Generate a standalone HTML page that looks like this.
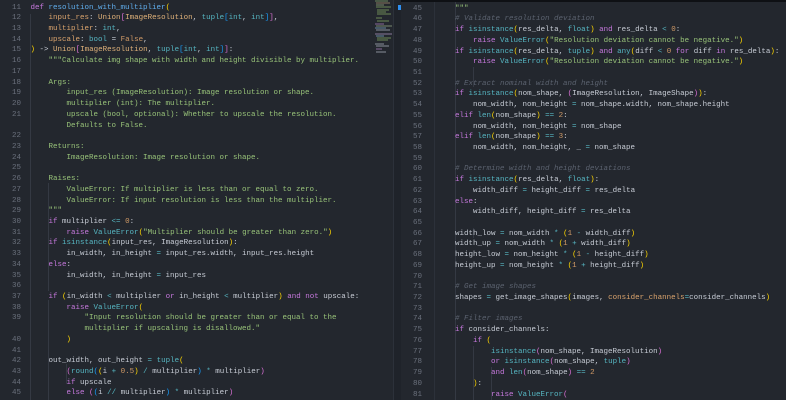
<!DOCTYPE html>
<html><head><meta charset="utf-8"><style>
html,body{margin:0;padding:0;width:786px;height:400px;overflow:hidden;background:#23272e;}
body{position:relative;font-family:"Liberation Mono",monospace;font-size:7.5px;}
.pane{position:absolute;top:0;height:400px;overflow:hidden;background:#23272e;}
.ln{position:absolute;text-align:right;color:#6b717d;}
.code{position:absolute;color:#c8cdd6;}
.ln div,.code div{height:10.73px;line-height:10.73px;white-space:pre;}
.k{color:#c678dd}.f{color:#61afef}.p{color:#dba46d}.t{color:#e0b27a}.b{color:#56b6c2}
.s{color:#98c379}.c{color:#5c6370;font-style:italic}.n{color:#d19a66}.o{color:#56b6c2}
.y{color:#ffd700}.m{color:#da70d6}.u{color:#179fff}
.g{position:absolute;width:1px;background:#343943;}
</style></head><body>
<div class="pane" style="left:0;width:372px;">
<div class="g" style="left:30px;top:14px;height:386px"></div>
<div class="g" style="left:48px;top:183px;height:108px"></div>
<div class="g" style="left:48px;top:300px;height:100px"></div>
<div class="g" style="left:66px;top:364px;height:20px"></div>
<div class="ln" style="left:0;width:21px;top:2.6px"><div>11</div><div>12</div><div>13</div><div>14</div><div>15</div><div>16</div><div>17</div><div>18</div><div>19</div><div>20</div><div>21</div><div></div><div>22</div><div>23</div><div>24</div><div>25</div><div>26</div><div>27</div><div>28</div><div>29</div><div>30</div><div>31</div><div>32</div><div>33</div><div>34</div><div>35</div><div>36</div><div>37</div><div>38</div><div>39</div><div></div><div>40</div><div>41</div><div>42</div><div>43</div><div>44</div><div>45</div></div>
<div class="code" style="left:30.5px;top:2.6px">
<div><span class="k">def</span> <span class="f">resolution_with_multiplier</span><span class="y">(</span></div>
<div>    <span class="p">input_res</span>: <span class="t">Union</span><span class="m">[</span><span class="t">ImageResolution</span>, <span class="b">tuple</span><span class="u">[</span><span class="b">int</span>, <span class="b">int</span><span class="u">]</span><span class="m">]</span>,</div>
<div>    <span class="p">multiplier</span>: <span class="b">int</span>,</div>
<div>    <span class="p">upscale</span>: <span class="b">bool</span> = <span class="n">False</span>,</div>
<div><span class="y">)</span> -&gt; <span class="t">Union</span><span class="m">[</span><span class="t">ImageResolution</span>, <span class="b">tuple</span><span class="u">[</span><span class="b">int</span>, <span class="b">int</span><span class="u">]</span><span class="m">]</span>:</div>
<div class="s">    """Calculate img shape with width and height divisible by multiplier.</div>
<div></div>
<div class="s">    Args:</div>
<div class="s">        input_res (ImageResolution): Image resolution or shape.</div>
<div class="s">        multiplier (int): The multiplier.</div>
<div class="s">        upscale (bool, optional): Whether to upscale the resolution.</div>
<div class="s">        Defaults to False.</div>
<div></div>
<div class="s">    Returns:</div>
<div class="s">        ImageResolution: Image resolution or shape.</div>
<div></div>
<div class="s">    Raises:</div>
<div class="s">        ValueError: If multiplier is less than or equal to zero.</div>
<div class="s">        ValueError: If input resolution is less than the multiplier.</div>
<div class="s">    """</div>
<div>    <span class="k">if</span> multiplier <span class="o">&lt;=</span> <span class="n">0</span>:</div>
<div>        <span class="k">raise</span> <span class="b">ValueError</span><span class="y">(</span><span class="s">"Multiplier should be greater than zero."</span><span class="y">)</span></div>
<div>    <span class="k">if</span> <span class="b">isinstance</span><span class="y">(</span>input_res, ImageResolution<span class="y">)</span>:</div>
<div>        in_width, in_height <span class="o">=</span> input_res.width, input_res.height</div>
<div>    <span class="k">else</span>:</div>
<div>        in_width, in_height <span class="o">=</span> input_res</div>
<div></div>
<div>    <span class="k">if</span> <span class="y">(</span>in_width <span class="o">&lt;</span> multiplier <span class="k">or</span> in_height <span class="o">&lt;</span> multiplier<span class="y">)</span> <span class="k">and</span> <span class="k">not</span> upscale:</div>
<div>        <span class="k">raise</span> <span class="b">ValueError</span><span class="y">(</span></div>
<div class="s">            "Input resolution should be greater than or equal to the</div>
<div class="s">            multiplier if upscaling is disallowed."</div>
<div>        <span class="y">)</span></div>
<div></div>
<div>    out_width, out_height <span class="o">=</span> <span class="b">tuple</span><span class="y">(</span></div>
<div>        <span class="m">(</span><span class="b">round</span><span class="u">(</span><span class="y">(</span>i <span class="o">+</span> <span class="n">0.5</span><span class="y">)</span> <span class="o">/</span> multiplier<span class="u">)</span> <span class="o">*</span> multiplier<span class="m">)</span></div>
<div>        <span class="k">if</span> upscale</div>
<div>        <span class="k">else</span> <span class="m">(</span><span class="u">(</span>i <span class="o">//</span> multiplier<span class="u">)</span> <span class="o">*</span> multiplier<span class="m">)</span></div>
</div>
</div>
<div style="position:absolute;left:372px;top:0;width:21px;height:400px;background:#23272e;">
<svg width="21" height="60" style="position:absolute;left:0;top:0">
<g stroke-width="1">
<line x1="3" y1="1" x2="16" y2="1" stroke="#6e8a5e"/><line x1="4" y1="3" x2="18" y2="3" stroke="#8a7a60"/><line x1="4" y1="5" x2="12" y2="5" stroke="#7a8a6a"/>
<line x1="4" y1="7" x2="19" y2="7" stroke="#6d8a55"/><line x1="5" y1="10" x2="17" y2="10" stroke="#6d8a55"/><line x1="5" y1="12" x2="14" y2="12" stroke="#6d8a55"/>
<line x1="5" y1="14" x2="19" y2="14" stroke="#6d8a55"/><line x1="4" y1="18" x2="10" y2="18" stroke="#6d8a55"/><line x1="5" y1="21" x2="17" y2="21" stroke="#6d8a55"/>
<line x1="3" y1="24" x2="12" y2="24" stroke="#8a6a9a"/><line x1="4" y1="26" x2="20" y2="26" stroke="#7a8a70"/><line x1="3" y1="28" x2="14" y2="28" stroke="#6a8aa0"/>
<line x1="4" y1="30" x2="18" y2="30" stroke="#8a8f99"/><line x1="3" y1="34" x2="20" y2="34" stroke="#8a7a9a"/><line x1="4" y1="36" x2="12" y2="36" stroke="#6a8aa0"/>
<line x1="5" y1="38" x2="19" y2="38" stroke="#6d8a55"/><line x1="5" y1="40" x2="16" y2="40" stroke="#6d8a55"/><line x1="3" y1="44" x2="12" y2="44" stroke="#8a8f99"/>
<line x1="4" y1="46" x2="17" y2="46" stroke="#8a8f99"/><line x1="4" y1="49" x2="10" y2="49" stroke="#8a6a9a"/><line x1="4" y1="52" x2="14" y2="52" stroke="#8a8f99"/>
</g></svg>
</div>
<div style="position:absolute;left:393px;top:0;width:8px;height:400px;background:#1f232a;border-left:1px solid #2c313a;box-sizing:border-box"></div>
<div style="position:absolute;left:398px;top:5px;width:3px;height:5px;background:#2f8ff0"></div>
<div class="pane" style="left:401px;width:385px;">
<div style="position:absolute;left:0;top:0;width:385px;height:2px;background:#0e1014;z-index:2"></div>
<div class="g" style="left:33px;top:0;height:400px;background:#2c313a"></div>
<div class="g" style="left:54px;top:0;height:400px"></div>
<div class="g" style="left:72px;top:67px;height:20px"></div>
<div class="g" style="left:72px;top:228px;height:10px"></div>
<div class="g" style="left:72px;top:346px;height:54px"></div>
<div class="g" style="left:90px;top:367px;height:33px"></div>
<div class="ln" style="left:0;width:21px;top:-7.1px"><div>44</div><div>45</div><div>46</div><div>47</div><div>48</div><div>49</div><div>50</div><div>51</div><div>52</div><div>53</div><div>54</div><div>55</div><div>56</div><div>57</div><div>58</div><div>59</div><div>60</div><div>61</div><div>62</div><div>63</div><div>64</div><div>65</div><div>66</div><div>67</div><div>68</div><div>69</div><div>70</div><div>71</div><div>72</div><div>73</div><div>74</div><div>75</div><div>76</div><div>77</div><div>78</div><div>79</div><div>80</div><div>81</div></div>
<div class="code" style="left:54px;top:-7.1px">
<div class="s">        consider_channels is True.</div>
<div class="s">"""</div>
<div class="c"># Validate resolution deviation</div>
<div><span class="k">if</span> <span class="b">isinstance</span><span class="y">(</span>res_delta, <span class="b">float</span><span class="y">)</span> <span class="k">and</span> res_delta <span class="o">&lt;</span> <span class="n">0</span>:</div>
<div>    <span class="k">raise</span> <span class="b">ValueError</span><span class="y">(</span><span class="s">"Resolution deviation cannot be negative."</span><span class="y">)</span></div>
<div><span class="k">if</span> <span class="b">isinstance</span><span class="y">(</span>res_delta, <span class="b">tuple</span><span class="y">)</span> <span class="k">and</span> <span class="b">any</span><span class="y">(</span>diff <span class="o">&lt;</span> <span class="n">0</span> <span class="k">for</span> diff <span class="k">in</span> res_delta<span class="y">)</span>:</div>
<div>    <span class="k">raise</span> <span class="b">ValueError</span><span class="y">(</span><span class="s">"Resolution deviation cannot be negative."</span><span class="y">)</span></div>
<div></div>
<div class="c"># Extract nominal width and height</div>
<div><span class="k">if</span> <span class="b">isinstance</span><span class="y">(</span>nom_shape, <span class="m">(</span>ImageResolution, ImageShape<span class="m">)</span><span class="y">)</span>:</div>
<div>    nom_width, nom_height <span class="o">=</span> nom_shape.width, nom_shape.height</div>
<div><span class="k">elif</span> <span class="b">len</span><span class="y">(</span>nom_shape<span class="y">)</span> <span class="o">==</span> <span class="n">2</span>:</div>
<div>    nom_width, nom_height <span class="o">=</span> nom_shape</div>
<div><span class="k">elif</span> <span class="b">len</span><span class="y">(</span>nom_shape<span class="y">)</span> <span class="o">==</span> <span class="n">3</span>:</div>
<div>    nom_width, nom_height, _ <span class="o">=</span> nom_shape</div>
<div></div>
<div class="c"># Determine width and height deviations</div>
<div><span class="k">if</span> <span class="b">isinstance</span><span class="y">(</span>res_delta, <span class="b">float</span><span class="y">)</span>:</div>
<div>    width_diff <span class="o">=</span> height_diff <span class="o">=</span> res_delta</div>
<div><span class="k">else</span>:</div>
<div>    width_diff, height_diff <span class="o">=</span> res_delta</div>
<div></div>
<div>width_low <span class="o">=</span> nom_width <span class="o">*</span> <span class="y">(</span><span class="n">1</span> <span class="o">-</span> width_diff<span class="y">)</span></div>
<div>width_up <span class="o">=</span> nom_width <span class="o">*</span> <span class="y">(</span><span class="n">1</span> <span class="o">+</span> width_diff<span class="y">)</span></div>
<div>height_low <span class="o">=</span> nom_height <span class="o">*</span> <span class="y">(</span><span class="n">1</span> <span class="o">-</span> height_diff<span class="y">)</span></div>
<div>height_up <span class="o">=</span> nom_height <span class="o">*</span> <span class="y">(</span><span class="n">1</span> <span class="o">+</span> height_diff<span class="y">)</span></div>
<div></div>
<div class="c"># Get image shapes</div>
<div>shapes <span class="o">=</span> get_image_shapes<span class="y">(</span>images, <span class="p">consider_channels</span><span class="o">=</span>consider_channels<span class="y">)</span></div>
<div></div>
<div class="c"># Filter images</div>
<div><span class="k">if</span> consider_channels:</div>
<div>    <span class="k">if</span> <span class="y">(</span></div>
<div>        <span class="b">isinstance</span><span class="m">(</span>nom_shape, ImageResolution<span class="m">)</span></div>
<div>        <span class="k">or</span> <span class="b">isinstance</span><span class="m">(</span>nom_shape, <span class="b">tuple</span><span class="m">)</span></div>
<div>        <span class="k">and</span> <span class="b">len</span><span class="m">(</span>nom_shape<span class="m">)</span> <span class="o">==</span> <span class="n">2</span></div>
<div>    <span class="y">)</span>:</div>
<div>        <span class="k">raise</span> <span class="b">ValueError</span><span class="m">(</span></div>
</div>
</div>
</body></html>
